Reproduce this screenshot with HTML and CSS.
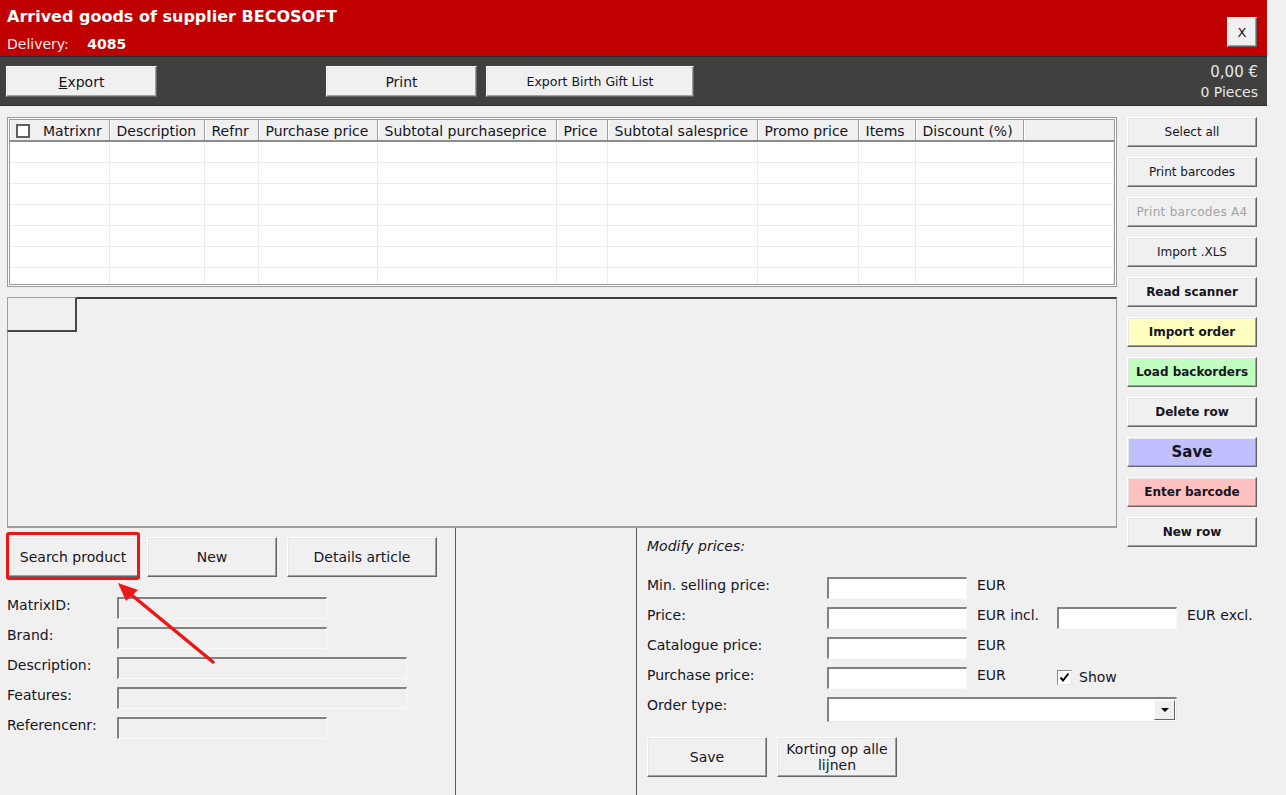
FILE: index.html
```html
<!DOCTYPE html>
<html>
<head>
    <meta charset="utf-8">
    <title>Arrived goods of supplier BECOSOFT</title>
    <link rel="stylesheet" href="styles.css">
</head>
<body>
<div class="window">
    <!-- Red title bar -->
    <div class="titlebar">
        <div class="title-block">
            <div class="title">Arrived goods of supplier BECOSOFT</div>
            <div class="delivery">Delivery: <b>4085</b></div>
        </div>
        <button class="btn close-btn">X</button>
    </div>

    <!-- Dark toolbar -->
    <div class="toolbar">
        <button class="btn tb-btn tb-export"><u>E</u>xport</button>
        <button class="btn tb-btn tb-print">Print</button>
        <button class="btn tb-btn tb-gift">Export Birth Gift List</button>
        <div class="totals">
            <div class="total-amount">0,00 €</div>
            <div>0 Pieces</div>
        </div>
    </div>

    <div class="main">
        <div class="left-col">
            <div class="grid-frame">
                <table class="grid">
                    <colgroup>
                        <col style="width: 99px">
                        <col style="width: 95px">
                        <col style="width: 54px">
                        <col style="width: 119px">
                        <col style="width: 179px">
                        <col style="width: 51px">
                        <col style="width: 150px">
                        <col style="width: 101px">
                        <col style="width: 57px">
                        <col style="width: 108px">
                        <col>
                    </colgroup>
                    <thead>
                        <tr>
                            <th class="first"><span class="hcheck"></span>Matrixnr</th>
                            <th>Description</th>
                            <th>Refnr</th>
                            <th>Purchase price</th>
                            <th>Subtotal purchaseprice</th>
                            <th>Price</th>
                            <th>Subtotal salesprice</th>
                            <th>Promo price</th>
                            <th>Items</th>
                            <th>Discount (%)</th>
                            <th class="last"></th>
                        </tr>
                    </thead>
                    <tbody>
                        <tr><td></td><td></td><td></td><td></td><td></td><td></td><td></td><td></td><td></td><td></td><td></td></tr>
                        <tr><td></td><td></td><td></td><td></td><td></td><td></td><td></td><td></td><td></td><td></td><td></td></tr>
                        <tr><td></td><td></td><td></td><td></td><td></td><td></td><td></td><td></td><td></td><td></td><td></td></tr>
                        <tr><td></td><td></td><td></td><td></td><td></td><td></td><td></td><td></td><td></td><td></td><td></td></tr>
                        <tr><td></td><td></td><td></td><td></td><td></td><td></td><td></td><td></td><td></td><td></td><td></td></tr>
                        <tr><td></td><td></td><td></td><td></td><td></td><td></td><td></td><td></td><td></td><td></td><td></td></tr>
                        <tr><td></td><td></td><td></td><td></td><td></td><td></td><td></td><td></td><td></td><td></td><td></td></tr>
                    </tbody>
                </table>
            </div>

            <div class="tabs">
                <div class="tabs-head">
                    <div class="tab"></div>
                    <div class="tab-rest"></div>
                </div>
                <div class="tab-body"></div>
            </div>
        </div>

        <div class="side-buttons">
            <button class="btn side-btn">Select all</button>
            <button class="btn side-btn">Print barcodes</button>
            <button class="btn side-btn disabled">Print barcodes A4</button>
            <button class="btn side-btn">Import .XLS</button>
            <button class="btn side-btn bold">Read scanner</button>
            <button class="btn side-btn bold yellow">Import order</button>
            <button class="btn side-btn bold green">Load backorders</button>
            <button class="btn side-btn bold">Delete row</button>
            <button class="btn side-btn bold blue save-btn">Save</button>
            <button class="btn side-btn bold pink">Enter barcode</button>
            <button class="btn side-btn bold">New row</button>
        </div>
    </div>

    <div class="bottom">
        <div class="article-panel">
            <div class="article-buttons">
                <button class="btn search-btn">Search product</button>
                <button class="btn new-btn">New</button>
                <button class="btn details-btn">Details article</button>
            </div>
            <div class="fields">
                <label>MatrixID:</label><div class="field"></div>
                <label>Brand:</label><div class="field"></div>
                <label>Description:</label><div class="field wide"></div>
                <label>Features:</label><div class="field wide"></div>
                <label>Referencenr:</label><div class="field"></div>
            </div>
        </div>

        <div class="middle-panel"></div>

        <div class="price-panel">
            <div class="section-title">Modify prices:</div>
            <div class="price-rows">
                <label>Min. selling price:</label>
                <div class="field white"></div>
                <span class="unit">EUR</span>

                <label>Price:</label>
                <div class="field white"></div>
                <span class="unit">EUR incl.</span>
                <div class="field white excl"></div>
                <span class="unit">EUR excl.</span>

                <label>Catalogue price:</label>
                <div class="field white"></div>
                <span class="unit">EUR</span>

                <label>Purchase price:</label>
                <div class="field white"></div>
                <span class="unit">EUR</span>
                <div class="show-check">
                    <span class="checkbox">
                        <svg width="11" height="11" viewBox="0 0 11 11"><polyline points="1.5,5.5 4,8.5 9.5,1.5" fill="none" stroke="#000" stroke-width="2"/></svg>
                    </span>
                    Show
                </div>

                <label>Order type:</label>
                <div class="select">
                    <div class="select-btn"><span class="caret"></span></div>
                </div>
            </div>
            <div class="price-buttons">
                <button class="btn price-btn">Save</button>
                <button class="btn price-btn">Korting op alle lijnen</button>
            </div>
        </div>
    </div>

    <!-- annotation arrow pointing at the search button -->
    <svg class="pointer-arrow" width="1286" height="795" viewBox="0 0 1286 795">
        <line x1="213" y1="662" x2="128" y2="592" stroke="#ec1717" stroke-width="3.5" stroke-linecap="round"/>
        <polygon points="118,583 138,590 126,601" fill="#ec1717"/>
    </svg>
</div>
</body>
</html>
```

FILE: styles.css
```css
* {
    box-sizing: border-box;
}

body {
    margin: 0;
    background: #f0f0f0;
    font-family: "DejaVu Sans", Verdana, sans-serif;
    font-size: 14px;
    color: #15151f;
}

.window {
    position: relative;
    width: 1267px;
    height: 795px;
    display: flex;
    flex-direction: column;
    overflow: hidden;
}

/* Classic raised button */
.btn {
    font-family: inherit;
    font-size: 14px;
    color: #15151f;
    background: #f0f0f0;
    border: 1px solid;
    border-color: #fdfdfd #646464 #646464 #fdfdfd;
    box-shadow: inset -1px -1px 0 #a0a0a0, inset 1px 1px 0 #e6e6e6;
    padding: 0;
    margin: 0;
    border-radius: 0;
    cursor: pointer;
}

/* Title bar */
.titlebar {
    height: 57px;
    flex-shrink: 0;
    background: #c00000;
    border-bottom: 1px solid #2a2a2a;
    display: flex;
    justify-content: space-between;
    align-items: flex-start;
    padding: 0 10px 0 7px;
    color: #fff;
}

.title {
    margin-top: 7px;
    font-size: 16px;
    font-weight: bold;
    line-height: 20px;
}

.delivery {
    margin-top: 8px;
    line-height: 18px;
    color: #f7e9e9;
}

.delivery b {
    margin-left: 14px;
    color: #fff;
}

.close-btn {
    width: 30px;
    height: 30px;
    margin-top: 17px;
    font-size: 13px;
}

/* Toolbar */
.toolbar {
    height: 49px;
    flex-shrink: 0;
    background: #404040;
    border-bottom: 1px solid #2a2a2a;
    display: flex;
    align-items: flex-start;
    padding: 9px 9px 0 6px;
}

.tb-btn {
    height: 31px;
}

.tb-export {
    width: 151px;
}

.tb-print {
    width: 151px;
    margin-left: 169px;
}

.tb-gift {
    width: 208px;
    margin-left: 9px;
    font-size: 12.5px;
}

.totals {
    margin-left: auto;
    margin-top: -4px;
    text-align: right;
    color: #e8e8e8;
    line-height: 20px;
}

.total-amount {
    font-size: 15px;
}

/* Grid and tab area */
.main {
    display: flex;
    align-items: flex-start;
    gap: 10px;
    padding: 11px 0 0 7px;
    flex-shrink: 0;
}

.left-col {
    width: 1110px;
}

.grid-frame {
    height: 170px;
    border: 3px double #9a9a9a;
    background: #fff;
    overflow: hidden;
}

.grid {
    width: 100%;
    border-collapse: collapse;
    table-layout: fixed;
}

.grid th {
    height: 21px;
    padding: 1px 0 0 7px;
    background: #f0f0f0;
    font-weight: normal;
    text-align: left;
    white-space: nowrap;
    overflow: hidden;
    border-right: 1px solid #a0a0a0;
    border-bottom: 2px solid #8c8c8c;
    box-shadow: inset 1px 0 0 #fff;
}

.grid th.first {
    padding-left: 6px;
}

.grid th.last {
    border-right: none;
}

.hcheck {
    display: inline-block;
    width: 14px;
    height: 14px;
    margin-right: 13px;
    vertical-align: -2px;
    background: #fff;
    border: 2px solid #5f5f5f;
}

.grid td {
    height: 21px;
    padding: 0;
    border-right: 1px solid #ececec;
    border-bottom: 1px solid #ececec;
}

.tabs {
    margin-top: 10px;
    height: 231px;
    display: flex;
    flex-direction: column;
    border-bottom: 2px solid #a0a0a0;
}

.tabs-head {
    display: flex;
    height: 35px;
}

.tab {
    width: 70px;
    border-top: 1px solid #a0a0a0;
    border-left: 1px solid #a0a0a0;
    border-right: 2px solid #474747;
    border-bottom: 2px solid #474747;
}

.tab-rest {
    flex: 1;
    border-top: 2px solid #3c3c3c;
    border-right: 1px solid #a0a0a0;
}

.tab-body {
    flex: 1;
    border-left: 1px solid #a0a0a0;
    border-right: 1px solid #a0a0a0;
}

/* Right-hand action buttons */
.side-buttons {
    width: 130px;
    display: flex;
    flex-direction: column;
    gap: 10px;
    margin-bottom: -20px;
}

.side-btn {
    height: 30px;
    font-size: 12px;
}

.side-btn.bold {
    font-weight: bold;
}

.side-btn.disabled {
    color: #a3a3a3;
    letter-spacing: 0.3px;
}

.side-btn.yellow {
    background: #ffffc0;
}

.side-btn.green {
    background: #c0ffc0;
}

.side-btn.blue {
    background: #c0c0ff;
}

.side-btn.pink {
    background: #ffc0c0;
}

.side-btn.save-btn {
    font-size: 15px;
}

/* Bottom panels */
.bottom {
    flex: 1;
    display: flex;
}

.article-panel {
    width: 456px;
    flex-shrink: 0;
    border-right: 1px solid #5a5a5a;
    padding: 9px 0 0 7px;
}

.middle-panel {
    width: 181px;
    flex-shrink: 0;
    border-right: 1px solid #5a5a5a;
}

.price-panel {
    flex: 1;
    min-width: 0;
    padding: 9px 0 0 10px;
}

.article-buttons {
    display: flex;
    height: 40px;
}

.article-buttons .btn {
    height: 40px;
}

.search-btn {
    position: relative;
    width: 132px;
}

.search-btn::after {
    content: "";
    position: absolute;
    left: -2px;
    right: -2px;
    top: -6px;
    bottom: -4px;
    border: 3px solid #f01414;
    border-radius: 3px;
}

.new-btn {
    width: 130px;
    margin-left: 8px;
}

.details-btn {
    width: 150px;
    margin-left: 10px;
}

.fields {
    margin-top: 20px;
    display: grid;
    grid-template-columns: 110px auto;
    row-gap: 8px;
    justify-items: start;
}

label {
    line-height: 16px;
    color: #15151f;
}

.field {
    height: 22px;
    width: 210px;
    background: #f0f0f0;
    border-style: solid;
    border-width: 2px 1px 1px 2px;
    border-color: #828282 #fafafa #fafafa #828282;
}

.field.wide {
    width: 290px;
}

.field.white {
    width: 140px;
    background: #fff;
}

.field.white.excl {
    width: 120px;
}

.section-title {
    font-style: italic;
    line-height: 18px;
}

.price-rows {
    margin-top: 22px;
    display: grid;
    grid-template-columns: 180px 140px 90px 120px auto;
    row-gap: 8px;
    align-items: start;
    justify-items: start;
}

.price-rows label {
    grid-column: 1;
}

.unit {
    padding-left: 10px;
    line-height: 16px;
    white-space: nowrap;
}

.show-check {
    grid-column: 4 / span 2;
    display: flex;
    align-items: center;
    gap: 7px;
    padding-top: 2px;
    line-height: 16px;
}

.checkbox {
    width: 15px;
    height: 15px;
    background: #fff;
    border-style: solid;
    border-width: 1px;
    border-color: #8a8a8a #e8e8e8 #e8e8e8 #8a8a8a;
    display: flex;
    align-items: center;
    justify-content: center;
}

.select {
    grid-column: 2 / span 3;
    height: 25px;
    width: 350px;
    background: #fff;
    border-style: solid;
    border-width: 2px 1px 1px 2px;
    border-color: #828282 #e6e6e6 #e6e6e6 #828282;
    display: flex;
    justify-content: flex-end;
    padding: 1px 1px 1px 0;
}

.select-btn {
    width: 21px;
    background: #f0f0f0;
    border: 1px solid;
    border-color: #fdfdfd #646464 #646464 #fdfdfd;
    display: flex;
    align-items: center;
    justify-content: center;
}

.caret {
    width: 0;
    height: 0;
    border-left: 4px solid transparent;
    border-right: 4px solid transparent;
    border-top: 4px solid #000;
}

.price-buttons {
    display: flex;
    gap: 10px;
    margin-top: 15px;
}

.price-btn {
    width: 120px;
    height: 40px;
    line-height: 16px;
}

.pointer-arrow {
    position: absolute;
    left: 0;
    top: 0;
    pointer-events: none;
}
```
